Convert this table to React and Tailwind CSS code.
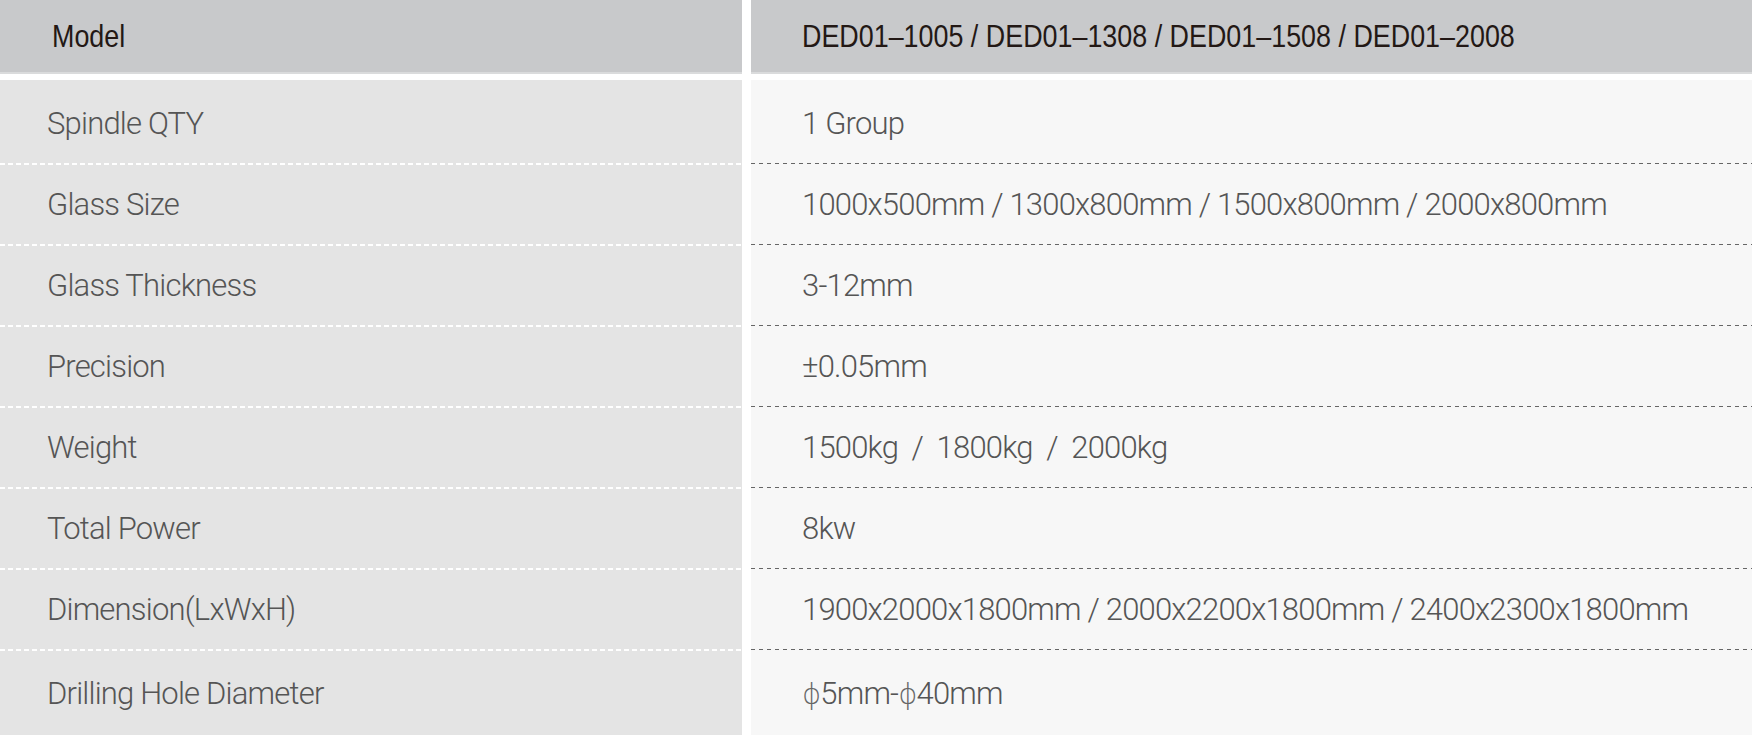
const specs = [
  ["Spindle QTY", "1 Group"],
  ["Glass Size", "1000x500mm / 1300x800mm / 1500x800mm / 2000x800mm"],
  ["Glass Thickness", "3-12mm"],
  ["Precision", "±0.05mm"],
  ["Weight", "1500kg  /  1800kg  /  2000kg"],
  ["Total Power", "8kw"],
  ["Dimension(LxWxH)", "1900x2000x1800mm / 2000x2200x1800mm / 2400x2300x1800mm"],
  [
    "Drilling Hole Diameter",
    <>
      <Phi />5mm-<Phi />40mm
    </>,
  ],
];

const headFont = "font-['Liberation_Sans',sans-serif]";
const bodyFont = "font-['Roboto','Liberation_Sans',sans-serif]";

function Phi() {
  return <span className="font-['DejaVu_Sans',sans-serif] font-extralight text-[29px] text-[#666]">ϕ</span>;
}

// header face is condensed in the original; squeeze Liberation Sans to match
function Narrow({ children }) {
  return <span className="inline-block whitespace-nowrap origin-left scale-x-[0.84]">{children}</span>;
}

function SpecRow({ label, value, first, last }) {
  const h = first ? "h-[83px] pt-[5px]" : last ? "h-[84px] pt-[2px]" : "h-[79px] pt-[2px]";
  const text = `${h} flex items-center text-[31px] tracking-[-0.8px] font-light text-[#555] whitespace-pre ${bodyFont}`;
  return (
    <>
      <div className="flex flex-col bg-[#e4e4e4]">
        <div className={`${text} pl-[47px]`}>{label}</div>
        {!last && <div className="h-[2px] bg-[linear-gradient(to_right,#ffffff_5px,transparent_5px)] bg-[length:8px_2px] bg-repeat-x" />}
      </div>
      <div className="flex flex-col bg-[#f7f7f7]">
        <div className={`${text} pl-[51px]`}>
          <span>{value}</span>
        </div>
        {!last && (
          <div className="h-[2px] flex items-start">
            <div className="w-full h-px bg-[linear-gradient(to_right,#666666_4px,transparent_4px)] bg-[length:8px_1px] bg-repeat-x" />
          </div>
        )}
      </div>
    </>
  );
}

export default function App() {
  return (
    <div className="w-[1752px] h-[735px] overflow-hidden bg-white">
      <div className="grid grid-cols-[742px_1fr] gap-x-[9px]">
        <div className={`h-[74px] flex items-center pl-[52px] bg-[#c8c9cb] border-b-2 border-[#dadbdc] text-[32px] text-[#231815] ${headFont}`}>
          <Narrow>Model</Narrow>
        </div>
        <div className={`h-[74px] flex items-center pl-[51px] bg-[#c8c9cb] border-b-2 border-[#dadbdc] text-[32px] text-[#231815] ${headFont}`}>
          <Narrow>DED01–1005 / DED01–1308 / DED01–1508 / DED01–2008</Narrow>
        </div>
      </div>
      <div className="h-[6px]" />
      <div className="grid grid-cols-[742px_1fr] gap-x-[9px]">
        {specs.map(([label, value], i) => (
          <SpecRow key={label} label={label} value={value} first={i === 0} last={i === specs.length - 1} />
        ))}
      </div>
    </div>
  );
}
